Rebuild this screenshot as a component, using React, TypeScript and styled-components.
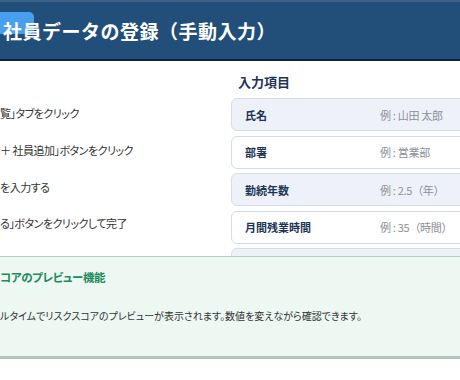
import styled, { createGlobalStyle } from "styled-components";

const GlobalStyle = createGlobalStyle`
  html, body {
    margin: 0;
    padding: 0;
    background: #ffffff;
  }
  body {
    font-family: "Noto Sans CJK JP", "Noto Sans", sans-serif;
  }
`;

const Page = styled.div`
  width: 460px;
  height: 380px;
  overflow: hidden;
  background: #ffffff;
`;

const Header = styled.header`
  position: relative;
  height: 57px;
  background: #224e7a;
  border-top: 2px solid #3d6389;
  border-bottom: 2px solid #0f1f48;
  display: flex;
  align-items: center;
`;

const Badge = styled.span`
  position: absolute;
  left: 0;
  top: 10px;
  width: 34px;
  height: 22px;
  background: #4a9eee;
  border-radius: 0 5px 5px 0;
`;

const Title = styled.h1`
  position: relative;
  margin: 0 0 0 3px;
  font-size: 19px;
  font-weight: 700;
  color: #ffffff;
  line-height: 1;
  letter-spacing: 0.5px;
  padding-bottom: 1px;
`;

const Main = styled.div`
  display: grid;
  grid-template-columns: 220px 260px;
  column-gap: 11px;
  height: 195px;
  overflow: hidden;
`;

const Steps = styled.ol`
  list-style: none;
  margin: 0;
  padding: 34px 0 0 0;
  display: flex;
  flex-direction: column;
`;

const Step = styled.li`
  height: 36.7px;
  display: flex;
  align-items: center;
  font-size: 11px;
  letter-spacing: -0.5px;
  color: #333333;
  font-feature-settings: "palt";
  white-space: nowrap;
`;

const Form = styled.div`
  display: flex;
  flex-direction: column;
  padding-top: 11px;
`;

const FormHeading = styled.h2`
  margin: 0 0 6px 7px;
  font-size: 13px;
  line-height: 20px;
  font-weight: 700;
  color: #1c3557;
`;

const Fields = styled.div`
  display: flex;
  flex-direction: column;
  gap: 4.5px;
`;

const Field = styled.div<{ $shaded: boolean }>`
  height: 31px;
  flex: none;
  display: grid;
  grid-template-columns: 135px 1fr;
  align-items: center;
  padding-left: 13px;
  background: ${(p) => (p.$shaded ? "#eef2f8" : "#ffffff")};
  border: 1px solid #d3dce8;
  border-radius: 6px;
`;

const Label = styled.span`
  font-size: 11px;
  font-weight: 700;
  color: #1c3557;
  font-feature-settings: "palt";
`;

const Placeholder = styled.span`
  font-size: 11px;
  color: #8b9099;
  white-space: pre;
  letter-spacing: -0.3px;
`;

const Note = styled.section`
  background: #edf8f3;
  border-top: 1px solid #b7d2c5;
  border-bottom: 3px solid #b1c5bd;
  padding: 11px 0 31px 0;
`;

const NoteTitle = styled.h3`
  margin: 0 0 21px 0;
  font-size: 11.5px;
  line-height: 18px;
  font-weight: 700;
  color: #238a5c;
  letter-spacing: -0.4px;
  font-feature-settings: "palt";
`;

const NoteText = styled.p`
  margin: 0;
  font-size: 10px;
  line-height: 18px;
  color: #333333;
  font-feature-settings: "palt";
  white-space: nowrap;
`;

const steps = [
  "覧」タブをクリック",
  "＋ 社員追加」ボタンをクリック",
  "を入力する",
  "る」ボタンをクリックして完了",
];

const fields = [
  { label: "氏名", hint: "例 : 山田 太郎" },
  { label: "部署", hint: "例 : 営業部" },
  { label: "勤続年数", hint: "例 : 2.5（年）" },
  { label: "月間残業時間", hint: "例 : 35（時間）" },
  { label: "", hint: "" },
];

export default function App() {
  return (
    <>
      <GlobalStyle />
      <Page>
        <Header>
          <Badge />
          <Title>社員データの登録（手動入力）</Title>
        </Header>
        <Main>
          <Steps>
            {steps.map((s) => (
              <Step key={s}>{s}</Step>
            ))}
          </Steps>
          <Form>
            <FormHeading>入力項目</FormHeading>
            <Fields>
              {fields.map((f, i) => (
                <Field key={i} $shaded={i % 2 === 0}>
                  <Label>{f.label}</Label>
                  <Placeholder>{f.hint}</Placeholder>
                </Field>
              ))}
            </Fields>
          </Form>
        </Main>
        <Note>
          <NoteTitle>コアのプレビュー機能</NoteTitle>
          <NoteText>
            ルタイムでリスクスコアのプレビューが表示されます。数値を変えながら確認できます。
          </NoteText>
        </Note>
      </Page>
    </>
  );
}
